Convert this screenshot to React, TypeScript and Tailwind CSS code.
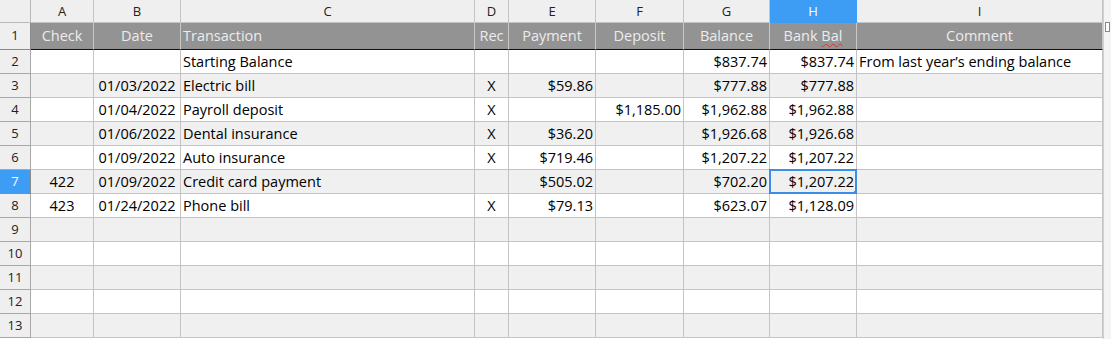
const cols = [
  { key: 'A', w: 'w-[63px]' },
  { key: 'B', w: 'w-[87px]' },
  { key: 'C', w: 'w-[294px]' },
  { key: 'D', w: 'w-[34px]' },
  { key: 'E', w: 'w-[87px]' },
  { key: 'F', w: 'w-[88px]' },
  { key: 'G', w: 'w-[86px]' },
  { key: 'H', w: 'w-[87px]' },
  { key: 'I', w: 'w-[246px]' },
];

type Row = [string, string, string, string, string, string, string, string, string];

const rows: Row[] = [
  ['', '', 'Starting Balance', '', '', '', '$837.74', '$837.74', 'From last year’s ending balance'],
  ['', '01/03/2022', 'Electric bill', 'X', '$59.86', '', '$777.88', '$777.88', ''],
  ['', '01/04/2022', 'Payroll deposit', 'X', '', '$1,185.00', '$1,962.88', '$1,962.88', ''],
  ['', '01/06/2022', 'Dental insurance', 'X', '$36.20', '', '$1,926.68', '$1,926.68', ''],
  ['', '01/09/2022', 'Auto insurance', 'X', '$719.46', '', '$1,207.22', '$1,207.22', ''],
  ['422', '01/09/2022', 'Credit card payment', '', '$505.02', '', '$702.20', '$1,207.22', ''],
  ['423', '01/24/2022', 'Phone bill', 'X', '$79.13', '', '$623.07', '$1,128.09', ''],
  ['', '', '', '', '', '', '', '', ''],
  ['', '', '', '', '', '', '', '', ''],
  ['', '', '', '', '', '', '', '', ''],
  ['', '', '', '', '', '', '', '', ''],
  ['', '', '', '', '', '', '', '', ''],
];

// alignment per column for data rows
const align = [
  'justify-center',
  'justify-center',
  'justify-start',
  'justify-center',
  'justify-end',
  'justify-end',
  'justify-end',
  'justify-end',
  'justify-start',
];

const headers = ['Check', 'Date', 'Transaction', 'Rec', 'Payment', 'Deposit', 'Balance', 'Bank Bal', 'Comment'];
const headAlign = [
  'justify-center',
  'justify-center',
  'justify-start',
  'justify-center',
  'justify-center',
  'justify-center',
  'justify-center',
  'justify-center',
  'justify-center',
];

function ColumnHeaders() {
  return (
    <div className="flex h-[23px]">
      <div className="w-[31px] h-full bg-[#efefef] border-r border-b border-[#b8b8b8]" />
      {cols.map((c) => (
        <div
          key={c.key}
          className={`${c.w} h-full flex items-center justify-center pt-[1px] text-[13px] border-r border-b ${
            c.key === 'H'
              ? 'bg-[#3d9cf3] text-white border-[#3d9cf3]'
              : 'bg-[#efefef] text-[#222] border-[#c4c4c4]'
          }`}
        >
          {c.key}
        </div>
      ))}
    </div>
  );
}

function TitleRow() {
  return (
    <div className="flex h-[27px]">
      <div className="w-[31px] h-full bg-[#efefef] border-r border-b border-[#8a8a8a] flex items-center justify-center text-[13px] text-[#222]">
        1
      </div>
      {cols.map((c, i) => (
        <div
          key={c.key}
          className={`${c.w} h-full flex items-center ${headAlign[i]} px-[2px] bg-[#939393] text-[#ececec] text-[14.5px] border-r border-[#c8c8c8] border-b border-b-[#111]`}
        >
          {headers[i] === 'Bank Bal' ? (
            <span>
              Bank <span className="underline decoration-wavy decoration-[#e03030] decoration-1 underline-offset-2">Bal</span>
            </span>
          ) : (
            headers[i]
          )}
        </div>
      ))}
    </div>
  );
}

function DataRow({ row, n }: { row: Row; n: number }) {
  const odd = n % 2 === 1;
  const selRow = n === 7;
  return (
    <div className="flex h-[24px]">
      <div
        className={`w-[31px] h-full border-r border-b flex items-center justify-center text-[13px] ${
          selRow ? 'bg-[#3d9cf3] text-white border-[#3d9cf3] border-r-[#8a8a8a]' : 'bg-[#efefef] text-[#222] border-[#a8a8a8]'
        }`}
      >
        {n}
      </div>
      {cols.map((c, i) => (
        <div
          key={c.key}
          className={`${c.w} relative h-full flex items-center ${align[i]} px-[2px] pt-[1px] text-[14.5px] text-black whitespace-nowrap border-r border-b border-[#c4c4c4] ${
            odd ? 'bg-[#f0f0f0]' : 'bg-white'
          }`}
        >
          {row[i]}
          {selRow && c.key === 'H' && (
            <>
              <div className="absolute -left-[1px] -top-[1px] right-[-1px] bottom-[-1px] border-2 border-[#3a8ee6]" />
              <div className="absolute right-[-3px] bottom-[-3px] w-[5px] h-[5px] bg-[#3a8ee6]" />
            </>
          )}
        </div>
      ))}
    </div>
  );
}

export default function App() {
  return (
    <div className="w-[1111px] h-[339px] overflow-hidden bg-white flex font-['Open_Sans',sans-serif]">
      <div className="flex flex-col">
        <ColumnHeaders />
        <TitleRow />
        {rows.map((r, i) => (
          <DataRow key={i} row={r} n={i + 2} />
        ))}
      </div>
      <div className="flex-1 bg-[#f4f4f4] border-l border-[#d0d0d0] flex flex-col">
        <div className="h-[22px]" />
        <div className="mx-auto w-[5px] h-[10px] border border-[#888] bg-white" />
      </div>
    </div>
  );
}
